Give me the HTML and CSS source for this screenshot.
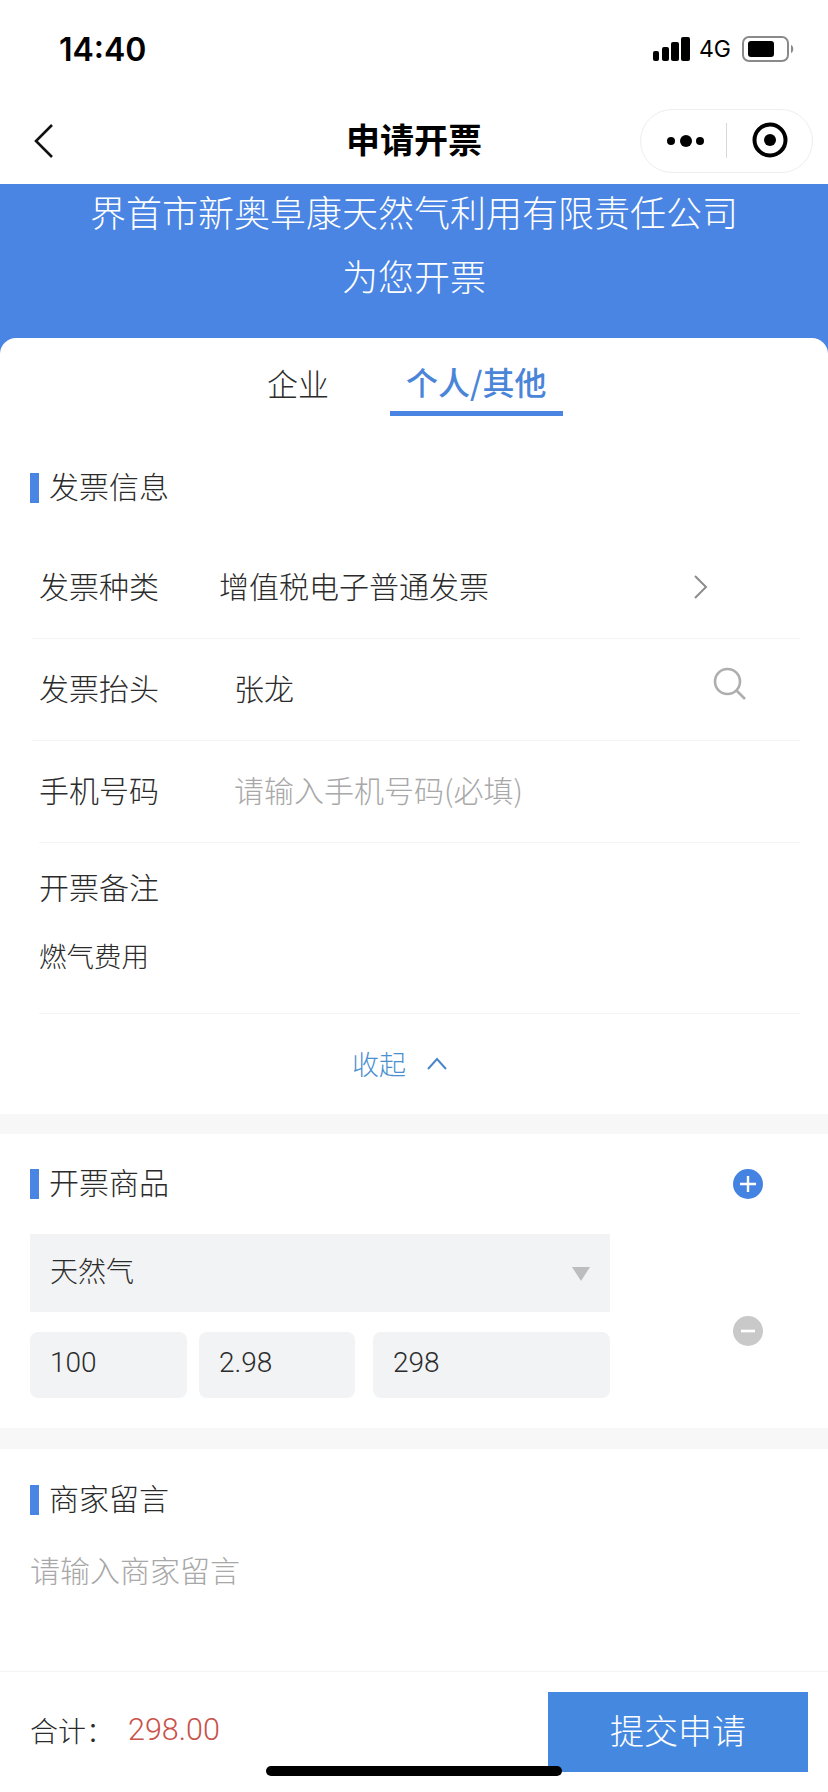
FILE: index.html
```html
<!DOCTYPE html>
<html lang="zh-CN">
  <head>
    <meta charset="UTF-8" />
    <title>申请开票</title>
    <link rel="stylesheet" href="styles.css">
  </head>
  <body>
    <div class="page">
      <div class="status">
        <span class="time">14:40</span>
        <div class="status-right">
          <svg width="37" height="24" viewBox="0 0 37 24">
            <rect x="0" y="14" width="6" height="10" rx="2" fill="#000" />
            <rect x="9" y="10" width="7" height="14" rx="2" fill="#000" />
            <rect x="18" y="5" width="8" height="19" rx="2" fill="#000" />
            <rect x="28" y="0" width="9" height="24" rx="2" fill="#000" />
          </svg>
          <span class="net">4G</span>
          <svg width="53" height="26" viewBox="0 0 53 26">
            <rect x="1" y="1" width="45" height="24" rx="6" fill="none" stroke="#8a8a8a" stroke-width="2" />
            <rect x="6" y="5" width="26" height="16" rx="3" fill="#000" />
            <path d="M49 9 C52 10 52 16 49 17 Z" fill="#8a8a8a" />
          </svg>
        </div>
      </div>

      <div class="nav">
        <svg class="nav-back" width="22" height="36" viewBox="0 0 22 36">
          <path d="M19 2 L3 18 L19 34" fill="none" stroke="#111" stroke-width="2.6" />
        </svg>
        <h1 class="nav-title">申请开票</h1>
        <div class="capsule">
          <svg width="173" height="64" viewBox="0 0 173 64">
            <circle cx="31" cy="32" r="4" fill="#000" />
            <circle cx="46" cy="32" r="6" fill="#000" />
            <circle cx="60" cy="32" r="4" fill="#000" />
            <rect x="86" y="14" width="1" height="35" fill="#d8d8d8" />
            <circle cx="130" cy="31" r="15.5" fill="none" stroke="#000" stroke-width="4" />
            <circle cx="130" cy="31" r="6" fill="#000" />
          </svg>
        </div>
      </div>

      <div class="banner">
        <p>界首市新奥阜康天然气利用有限责任公司</p>
        <p class="banner-sub">为您开票</p>
      </div>

      <div class="card">
        <div class="tabs">
          <span class="tab">企业</span>
          <span class="tab tab-active">个人/其他</span>
        </div>

        <div class="head head-first"><span class="head-bar"></span>发票信息</div>

        <div class="rows">
          <div class="row row-wide">
            <span class="label">发票种类</span>
            <span class="value value-flush">增值税电子普通发票</span>
            <svg class="row-arrow" width="15" height="26" viewBox="0 0 15 26">
              <path d="M2 2 L13 13 L2 24" fill="none" stroke="#8c8c8c" stroke-width="2" />
            </svg>
          </div>
          <div class="row row-wide">
            <span class="label">发票抬头</span>
            <span class="value">张龙</span>
            <svg class="row-search" width="34" height="34" viewBox="0 0 34 34">
              <circle cx="14.5" cy="14.5" r="12.5" fill="none" stroke="#aeaeae" stroke-width="2.6" />
              <path d="M23.5 23.5 L32 32" fill="none" stroke="#aeaeae" stroke-width="2.6" />
            </svg>
          </div>
          <div class="row">
            <span class="label">手机号码</span>
            <span class="value value-hint">请输入手机号码(必填)</span>
          </div>
          <div class="note">
            <div class="label">开票备注</div>
            <div class="note-text">燃气费用</div>
          </div>
        </div>

        <div class="fold">
          <span>收起</span>
          <svg width="22" height="13" viewBox="0 0 22 13">
            <path d="M2 12 L11 2 L20 12" fill="none" stroke="#4a86c8" stroke-width="2" />
          </svg>
        </div>

        <div class="band"></div>

        <div class="head head-goods">
          <span class="head-bar"></span>开票商品
          <svg class="head-add" width="30" height="30" viewBox="0 0 30 30">
            <circle cx="15" cy="15" r="15" fill="#4583e2" />
            <path d="M7 15 H23 M15 7 V23" stroke="#fff" stroke-width="2.4" />
          </svg>
        </div>

        <div class="goods">
          <div class="goods-form">
            <div class="select">
              <span class="select-text">天然气</span>
              <span class="select-arrow"></span>
            </div>
            <div class="inputs">
              <div class="input input-num">100</div>
              <div class="input input-price">2.98</div>
              <div class="input input-total">298</div>
            </div>
          </div>
          <svg class="goods-remove" width="30" height="30" viewBox="0 0 30 30">
            <circle cx="15" cy="15" r="15" fill="#c9c9c9" />
            <path d="M8 15 H22" stroke="#fff" stroke-width="2.6" />
          </svg>
        </div>

        <div class="band band-low"></div>

        <div class="head head-msg"><span class="head-bar"></span>商家留言</div>
        <div class="msg">请输入商家留言</div>
      </div>

      <div class="footer">
        <span class="sum-label">合计：</span>
        <span class="sum">298.00</span>
        <div class="submit">提交申请</div>
      </div>

      <div class="home-bar"></div>
    </div>
  </body>
</html>
```

FILE: styles.css
```css
:root {
  --blue: #4a85e3;
  --text: #2b2b2b;
  --hint: #a8a8a8;
  --line: #f4f4f4;
  --field: #f2f3f5;
}

* {
  box-sizing: border-box;
}

html,
body {
  margin: 0;
  padding: 0;
}

body {
  font-family: "Noto Sans CJK SC", sans-serif;
  font-weight: 300;
  color: var(--text);
  background-color: #fff;
}

.page {
  position: relative;
  width: 828px;
  height: 1792px;
  overflow: hidden;
  display: flex;
  flex-direction: column;
}

/* status bar */
.status {
  height: 98px;
  display: flex;
  justify-content: space-between;
  align-items: center;
  padding: 0 33px 0 59px;
  color: #000;
}

.time {
  font-family: Inter, sans-serif;
  font-weight: 600;
  font-size: 32px;
}

.status-right {
  display: flex;
  align-items: center;
  gap: 9px;
}

.net {
  font-family: Inter, sans-serif;
  font-weight: 400;
  font-size: 23px;
  margin-right: 2px;
}

/* nav */
.nav {
  height: 86px;
  display: grid;
  grid-template-columns: minmax(0, 1fr) auto minmax(0, 1fr);
  align-items: center;
  padding: 0 15px;
}

.nav-back {
  justify-self: start;
  margin-left: 18px;
}

.nav-title {
  margin: 0;
  padding-bottom: 4px;
  font-size: 34px;
  font-weight: 700;
  color: #000;
  line-height: 1;
}

.capsule {
  justify-self: end;
  width: 173px;
  height: 64px;
  border: 1px solid #eee;
  border-radius: 32px;
  overflow: hidden;
}

.capsule svg {
  display: block;
  margin: -1px;
}

/* banner */
.banner {
  height: 170px;
  background-color: var(--blue);
  color: #fff;
  text-align: center;
  font-size: 36px;
}

.banner p {
  margin: 0;
  line-height: 54px;
}

.banner-sub {
  padding-top: 10px;
  box-sizing: content-box;
}

/* card */
.card {
  flex: 1;
  margin-top: -16px;
  background-color: #fff;
  border-radius: 16px 16px 0 0;
}

.tabs {
  display: flex;
  gap: 61px;
  padding-left: 267px;
}

.tab {
  font-size: 31px;
  line-height: 34px;
  padding-top: 28px;
  padding-bottom: 11px;
  border-bottom: 5px solid transparent;
}

.tab-active {
  color: #4a85d8;
  font-size: 32px;
  font-weight: 500;
  padding-top: 26px;
  padding-bottom: 13px;
  padding-left: 16px;
  padding-right: 17px;
  border-bottom-color: var(--blue);
}

.head {
  display: flex;
  align-items: flex-start;
  gap: 10px;
  height: 30px;
  padding-left: 30px;
  font-size: 30px;
  line-height: 24px;
}

.head-bar {
  width: 9px;
  height: 30px;
  background-color: var(--blue);
}

.head-first {
  margin-top: 57px;
}

.head-goods {
  margin-top: 35px;
}

.head-add {
  margin-left: auto;
  margin-right: 65px;
}

.head-msg {
  margin-top: 36px;
}

/* form rows */
.rows {
  margin: 34px 28px 0 0;
}

.row {
  height: 102px;
  margin-left: 39px;
  padding-bottom: 6px;
  display: flex;
  align-items: center;
  border-bottom: 1px solid var(--line);
  font-size: 30px;
}

.row-wide {
  margin-left: 32px;
  padding-left: 7px;
}

.label {
  width: 180px;
  flex: none;
  font-size: 30px;
}

.value {
  padding-left: 15px;
}

.value-flush {
  padding-left: 0;
}

.value-hint {
  color: var(--hint);
}

.row-arrow {
  margin-left: auto;
  margin-right: 92px;
  margin-top: 5px;
}

.row-search {
  margin-left: auto;
  margin-right: 53px;
  margin-top: -5px;
}

.note {
  height: 171px;
  margin-left: 39px;
  padding-top: 21px;
  border-bottom: 1px solid var(--line);
}

.note .label {
  line-height: 44px;
}

.note-text {
  margin-top: 25px;
  font-size: 27.5px;
  line-height: 44px;
}

.fold {
  height: 100px;
  display: flex;
  justify-content: center;
  align-items: center;
  gap: 20px;
  color: #4a8fd0;
  font-size: 27px;
  padding-right: 28px;
  padding-bottom: 2px;
}

.band {
  height: 20px;
  background-color: #f7f7f7;
}

.band-low {
  height: 21px;
  margin-top: 30px;
}

/* goods */
.goods {
  display: flex;
  margin-top: 35px;
  padding-left: 30px;
}

.goods-form {
  width: 580px;
}

.goods-remove {
  margin-left: 123px;
  margin-top: 82px;
}

.select {
  height: 78px;
  display: flex;
  justify-content: space-between;
  align-items: center;
  padding: 0 20px;
  background-color: var(--field);
  font-size: 28px;
}

.select-text {
  margin-bottom: 6px;
}

.select-arrow {
  width: 0;
  height: 0;
  margin-top: 2px;
  border-left: 9px solid transparent;
  border-right: 9px solid transparent;
  border-top: 14px solid #bdbdbd;
}

.inputs {
  display: flex;
  margin-top: 20px;
}

.input {
  height: 66px;
  display: flex;
  align-items: center;
  padding-left: 20px;
  padding-bottom: 6px;
  background-color: var(--field);
  border-radius: 8px;
  font-family: Roboto, sans-serif;
  font-size: 28px;
  font-weight: 300;
}

.input-num {
  width: 157px;
}

.input-price {
  width: 156px;
  margin-left: 12px;
}

.input-total {
  width: 237px;
  margin-left: 18px;
}

/* message */
.msg {
  margin-top: 34px;
  padding-left: 30px;
  font-size: 30px;
  line-height: 40px;
  color: var(--hint);
}

/* footer */
.footer {
  height: 121px;
  display: flex;
  align-items: center;
  padding: 0 20px 0 30px;
  border-top: 1px solid var(--line);
}

.sum-label {
  font-size: 28px;
  width: 98px;
  padding-bottom: 5px;
}

.sum {
  font-family: Roboto, sans-serif;
  font-weight: 300;
  font-size: 30.5px;
  color: #c9524a;
  padding-bottom: 5px;
}

.submit {
  margin-left: auto;
  width: 260px;
  height: 80px;
  display: flex;
  justify-content: center;
  align-items: center;
  padding-bottom: 6px;
  background-color: #4588df;
  color: #fff;
  font-size: 34px;
}

.home-bar {
  position: absolute;
  left: 266px;
  bottom: 16px;
  width: 296px;
  height: 10px;
  border-radius: 5px;
  background-color: #000;
}
```
